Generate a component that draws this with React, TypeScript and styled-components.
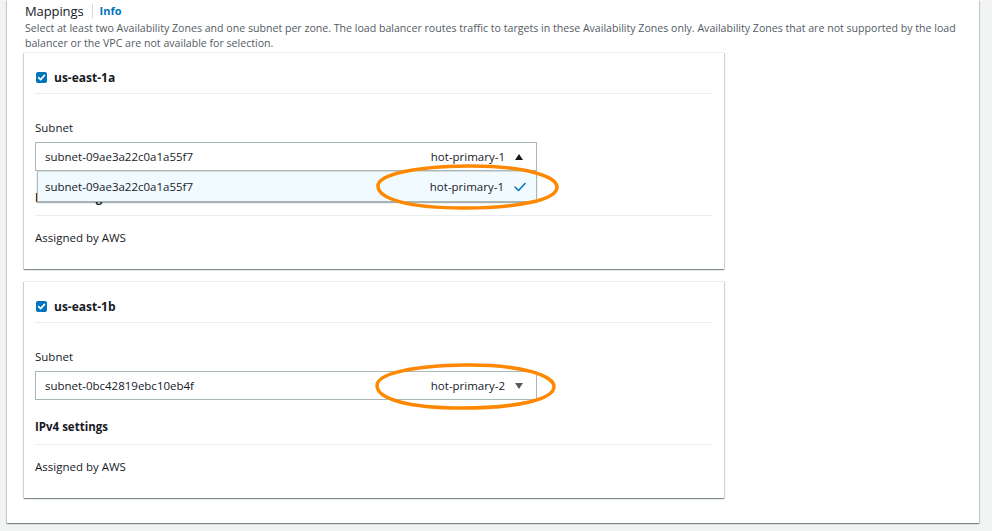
import React from "react";
import styled, { createGlobalStyle } from "styled-components";

const GlobalStyle = createGlobalStyle`
  html, body { margin: 0; padding: 0; }
  body {
    background: #f2f3f3;
    font-family: "Open Sans", "Noto Sans", "Liberation Sans", sans-serif;
    color: #16191f;
    -webkit-font-smoothing: antialiased;
  }
`;

const Page = styled.div`
  width: 992px;
  height: 531px;
  box-sizing: border-box;
  padding: 0 13px 9px 7px;
  overflow: hidden;
`;

const Panel = styled.section`
  background: #fff;
  box-shadow: 0 1px 1px 0 rgba(0, 28, 36, 0.3), 1px 1px 1px 0 rgba(0, 28, 36, 0.15),
    -1px 1px 1px 0 rgba(0, 28, 36, 0.15);
  padding: 0 17px 25px 17px;
`;

const HeaderRow = styled.div`
  display: flex;
  align-items: center;
  height: 21px;
  padding-left: 1px;
`;

const Title = styled.h2`
  margin: 0;
  font-size: 13px;
  font-weight: 400;
  color: #16191f;
  letter-spacing: -0.1px;
`;

const Divider = styled.span`
  width: 1px;
  height: 14px;
  background: #d5dbdb;
  margin: 0 7px 0 8px;
`;

const InfoLink = styled.a`
  font-size: 11px;
  font-weight: 700;
  color: #0073bb;
  text-decoration: none;
`;

const Description = styled.p`
  margin: 0 0 1px 1px;
  font-size: 10.6px;
  line-height: 15px;
  color: #545b64;
  width: 940px;
`;

const CardList = styled.div`
  display: flex;
  flex-direction: column;
  gap: 12px;
`;

const Card = styled.div`
  width: 700px;
  box-sizing: border-box;
  background: #fff;
  border-top: 1px solid #eaeded;
  box-shadow: 0 1px 1px 0 rgba(0, 28, 36, 0.3), 1px 1px 1px 0 rgba(0, 28, 36, 0.15),
    -1px 1px 1px 0 rgba(0, 28, 36, 0.15);
  padding: 0 11px 0 11px;
`;

const ZoneRow = styled.label`
  display: flex;
  align-items: center;
  gap: 7px;
  height: 41px;
  box-sizing: border-box;
  padding: 8px 0 0 1px;
  border-bottom: 1px solid #eaeded;
`;

const CheckBox = styled.span`
  width: 11px;
  height: 11px;
  border-radius: 2px;
  background: #0073bb;
  display: inline-flex;
  align-items: center;
  justify-content: center;
`;

const ZoneName = styled.span`
  font-size: 12px;
  font-weight: 700;
  color: #16191f;
`;

const FieldBlock = styled.div`
  display: flex;
  flex-direction: column;
  padding: 26px 0 9px 0;
  border-bottom: 1px solid #eaeded;
`;

const FieldLabel = styled.div<{ $bold?: boolean }>`
  font-size: 11.5px;
  line-height: 16px;
  font-weight: ${(p) => (p.$bold ? 700 : 400)};
  color: #16191f;
`;

const SelectWrap = styled.div`
  position: relative;
  width: 502px;
  margin: 6px 0 19px 0;
`;

const SelectBox = styled.div`
  height: 29px;
  box-sizing: border-box;
  border: 1px solid #aab7b8;
  background: #fff;
  display: flex;
  align-items: center;
  padding: 0 10px 0 9px;
  font-size: 11.5px;
  color: #16191f;
`;

const SubnetId = styled.span`
  flex: 1;
`;

const SubnetName = styled.span`
  margin-right: 10px;
`;

const Caret = styled.span<{ $up?: boolean }>`
  width: 0;
  height: 0;
  border-left: 4.5px solid transparent;
  border-right: 4.5px solid transparent;
  ${(p) =>
    p.$up
      ? "border-bottom: 6px solid #16191f;"
      : "border-top: 6px solid #545b64;"}
  margin-right: 3px;
`;

const Menu = styled.div`
  position: absolute;
  top: 29px;
  left: 2px;
  right: 0;
  z-index: 2;
  height: 31px;
  box-sizing: border-box;
  background: #f1faff;
  border: 1px solid #aab7b8;
  border-top: 1px solid #d5dbdb;
  box-shadow: 0 1px 1px 0 rgba(0, 28, 36, 0.35);
  display: flex;
  align-items: center;
  padding: 0 10px 0 7px;
  font-size: 11.5px;
  color: #16191f;
`;

const Annotation = styled.svg`
  position: absolute;
  z-index: 3;
  pointer-events: none;
  overflow: visible;
`;

const ValueText = styled.div`
  font-size: 11.5px;
  line-height: 16px;
  color: #16191f;
  padding: 14px 0 23px 0;
`;

const Check = () => (
  <svg width="9" height="9" viewBox="0 0 10 10">
    <path d="M1.8 5.2 L4 7.4 L8.3 2.6" fill="none" stroke="#fff" strokeWidth="1.8" strokeLinecap="round" strokeLinejoin="round" />
  </svg>
);

const SelectedTick = () => (
  <svg width="12" height="10" viewBox="0 0 12 10">
    <path d="M1 5 L4.5 8.5 L11 1.5" fill="none" stroke="#0073bb" strokeWidth="1.5" strokeLinecap="round" strokeLinejoin="round" />
  </svg>
);

type Ell = { left: number; top: number; w: number; h: number };

const Ellipse = ({ left, top, w, h }: Ell) => (
  <Annotation style={{ left, top }} width={w} height={h} viewBox={`0 0 ${w} ${h}`}>
    <path
      d={`M ${w * 0.5} 2 C ${w * 0.82} 1.5, ${w - 2} ${h * 0.28}, ${w - 2} ${h * 0.5} C ${w - 2} ${h * 0.78}, ${w * 0.78} ${h - 2}, ${w * 0.48} ${h - 2} C ${w * 0.18} ${h - 2}, 2 ${h * 0.76}, 2 ${h * 0.48} C 2 ${h * 0.22}, ${w * 0.22} 2.5, ${w * 0.5} 2 Z`}
      fill="none"
      stroke="#ff8800"
      strokeWidth="3.5"
    />
  </Annotation>
);

type Zone = {
  name: string;
  subnet: string;
  label: string;
  open: boolean;
  ellipse: Ell;
};

const zones: Zone[] = [
  {
    name: "us-east-1a",
    subnet: "subnet-09ae3a22c0a1a55f7",
    label: "hot-primary-1",
    open: true,
    ellipse: { left: 341, top: 22, w: 183, h: 46 },
  },
  {
    name: "us-east-1b",
    subnet: "subnet-0bc42819ebc10eb4f",
    label: "hot-primary-2",
    open: false,
    ellipse: { left: 340, top: -8, w: 181, h: 47 },
  },
];

const ZoneCard = ({ zone }: { zone: Zone }) => (
  <Card>
    <ZoneRow>
      <CheckBox>
        <Check />
      </CheckBox>
      <ZoneName>{zone.name}</ZoneName>
    </ZoneRow>
    <FieldBlock>
      <FieldLabel>Subnet</FieldLabel>
      <SelectWrap>
        <SelectBox>
          <SubnetId>{zone.subnet}</SubnetId>
          <SubnetName>{zone.label}</SubnetName>
          <Caret $up={zone.open} />
        </SelectBox>
        {zone.open && (
          <Menu>
            <SubnetId>{zone.subnet}</SubnetId>
            <SubnetName>{zone.label}</SubnetName>
            <SelectedTick />
          </Menu>
        )}
        <Ellipse {...zone.ellipse} />
      </SelectWrap>
      <FieldLabel $bold>IPv4 settings</FieldLabel>
    </FieldBlock>
    <ValueText>Assigned by AWS</ValueText>
  </Card>
);

export default function App() {
  return (
    <>
      <GlobalStyle />
      <Page>
        <Panel>
          <HeaderRow>
            <Title>Mappings</Title>
            <Divider />
            <InfoLink href="#">Info</InfoLink>
          </HeaderRow>
          <Description>
            Select at least two Availability Zones and one subnet per zone. The load balancer routes traffic to
            targets in these Availability Zones only. Availability Zones that are not supported by the load
            balancer or the VPC are not available for selection.
          </Description>
          <CardList>
            {zones.map((z) => (
              <ZoneCard key={z.name} zone={z} />
            ))}
          </CardList>
        </Panel>
      </Page>
    </>
  );
}
